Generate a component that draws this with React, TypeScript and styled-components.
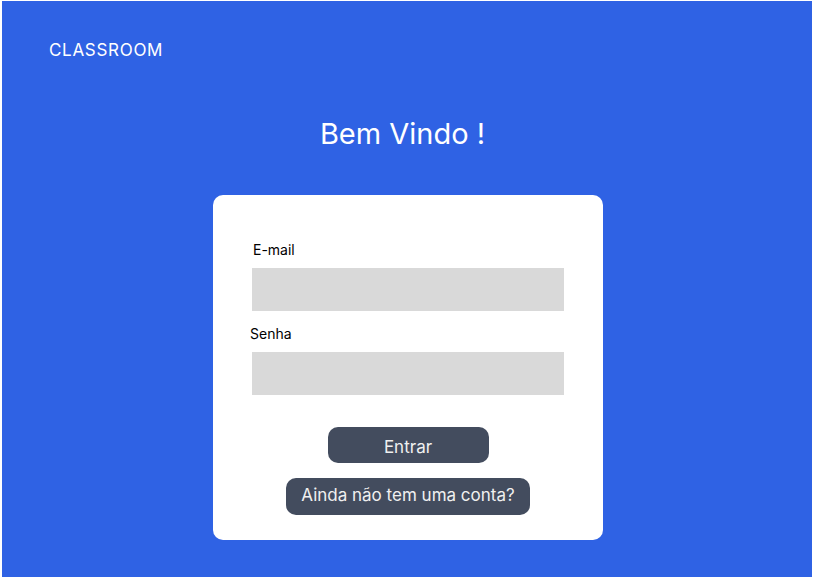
import React from "react";
import styled, { createGlobalStyle } from "styled-components";

const Global = createGlobalStyle`
  html, body { margin: 0; padding: 0; background: #ffffff; }
  body { font-family: Inter, "Noto Sans", sans-serif; }
  * { box-sizing: border-box; }
`;

const Outer = styled.div`
  width: 814px;
  height: 579px;
  padding: 1px 2px 2px 2px;
`;

const Frame = styled.main`
  width: 100%;
  height: 100%;
  background: #2f62e4;
  display: flex;
  flex-direction: column;
`;

const Header = styled.header`
  padding: 39px 0 0 47px;
  height: 60px;
`;

const Brand = styled.span`
  color: #ffffff;
  font-size: 17px;
  line-height: 20px;
  letter-spacing: 0.7px;
`;

const Title = styled.h1`
  margin: 56px 0 0 0;
  text-align: center;
  color: #ffffff;
  font-weight: 400;
  font-size: 29px;
  line-height: 34px;
  padding-right: 9px;
`;

const Card = styled.form`
  align-self: center;
  margin: 44px 0 0 2px;
  width: 390px;
  background: #ffffff;
  border-radius: 10px;
  padding: 46px 39px 25px 39px;
  display: flex;
  flex-direction: column;
`;

const Label = styled.label<{ $shift: number }>`
  font-size: 14px;
  line-height: 17px;
  color: #000000;
  margin-left: ${(p) => p.$shift}px;
`;

const Input = styled.div<{ $gapAfter: number }>`
  margin-top: 10px;
  margin-bottom: ${(p) => p.$gapAfter}px;
  width: 312px;
  height: 43px;
  background: #d9d9d9;
`;

const Button = styled.button<{ $w: number; $h: number; $nudge: number }>`
  align-self: center;
  width: ${(p) => p.$w}px;
  height: ${(p) => p.$h}px;
  background: #434c5e;
  color: #f0f0f0;
  border: none;
  border-radius: 10px;
  font-family: Inter, "Noto Sans", sans-serif;
  font-size: 17px;
  padding: ${(p) => (p.$nudge > 0 ? `${p.$nudge * 2}px 0 0 0` : `0 0 ${-p.$nudge * 2}px 0`)};
  cursor: pointer;
`;

const Spacer = styled.div<{ $h: number }>`
  height: ${(p) => p.$h}px;
`;

export default function App() {
  return (
    <>
      <Global />
      <Outer>
        <Frame>
          <Header>
            <Brand>CLASSROOM</Brand>
          </Header>
          <Title>Bem Vindo !</Title>
          <Card onSubmit={(e) => e.preventDefault()}>
            <Label $shift={1}>E-mail</Label>
            <Input $gapAfter={14} />
            <Label $shift={-2}>Senha</Label>
            <Input $gapAfter={32} />
            <Button type="button" $w={161} $h={36} $nudge={2}>
              Entrar
            </Button>
            <Spacer $h={15} />
            <Button type="button" $w={244} $h={37} $nudge={-2}>
              Ainda não tem uma conta?
            </Button>
          </Card>
        </Frame>
      </Outer>
    </>
  );
}
